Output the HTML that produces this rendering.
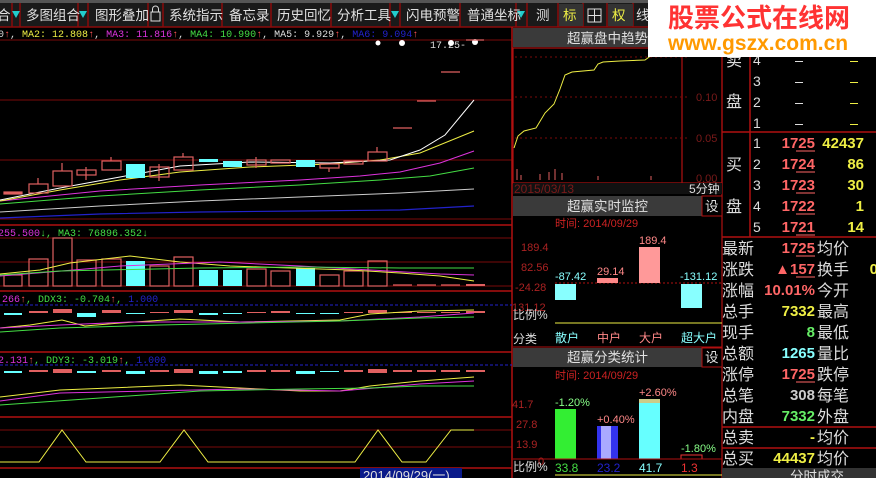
<!DOCTYPE html>
<html><head><meta charset="utf-8"><style>
html,body{margin:0;padding:0;background:#000;width:876px;height:478px;overflow:hidden}
svg text{font-family:"Liberation Sans","Noto Sans CJK SC",sans-serif}
.t{font-size:13.5px;fill:#e0e0e0}
.m{font-family:"Liberation Mono","Noto Sans CJK SC",monospace !important;font-size:10px}
</style></head><body>
<svg width="876" height="478" viewBox="0 0 876 478" xmlns="http://www.w3.org/2000/svg">
<rect x="0" y="0" width="876" height="27" fill="#1a1a1a"/>
<rect x="0" y="0" width="876" height="3" fill="#555"/>
<g stroke="#8a0a0a" stroke-width="1.5">
<line x1="12" y1="3" x2="12" y2="27"/><line x1="20" y1="3" x2="20" y2="27"/><line x1="78" y1="3" x2="78" y2="27"/><line x1="88" y1="3" x2="88" y2="27"/><line x1="148" y1="3" x2="148" y2="27"/><line x1="163" y1="3" x2="163" y2="27"/><line x1="222" y1="3" x2="222" y2="27"/><line x1="271" y1="3" x2="271" y2="27"/><line x1="331" y1="3" x2="331" y2="27"/><line x1="390" y1="3" x2="390" y2="27"/><line x1="400" y1="3" x2="400" y2="27"/><line x1="460" y1="3" x2="460" y2="27"/><line x1="516" y1="3" x2="516" y2="27"/><line x1="527" y1="3" x2="527" y2="27"/><line x1="558" y1="3" x2="558" y2="27"/><line x1="583" y1="3" x2="583" y2="27"/><line x1="607" y1="3" x2="607" y2="27"/><line x1="633" y1="3" x2="633" y2="27"/>
<line x1="0" y1="27" x2="876" y2="27"/>
</g>
<text x="-3" y="20" class="t">合</text>
<path d="M12 11h8l-4 7z" fill="#2cc"/><path d="M79 11h8l-4 7z" fill="#2cc"/><path d="M391 11h8l-4 7z" fill="#2cc"/><path d="M517 11h8l-4 7z" fill="#2cc"/>
<text x="26" y="20" class="t">多图组合</text><text x="95" y="20" class="t">图形叠加</text>
<rect x="151" y="12" width="9" height="9" fill="none" stroke="#ddd"/><path d="M152.5 12v-3a3 3 0 0 1 6 0v3" fill="none" stroke="#ddd"/>
<text x="169" y="20" class="t">系统指示</text><text x="229" y="20" class="t">备忘录</text><text x="277" y="20" class="t">历史回忆</text><text x="337" y="20" class="t">分析工具</text><text x="406" y="20" class="t">闪电预警</text><text x="467" y="20" class="t">普通坐标</text>
<text x="536" y="20" class="t">测</text><rect x="559" y="4" width="24" height="22" fill="#333"/>
<rect x="588" y="9" width="13" height="13" fill="none" stroke="#ddd"/><path d="M594.5 9v13M588 15.5h13" stroke="#ddd"/>
<rect x="608" y="4" width="25" height="22" fill="#333"/><text x="612" y="20" class="t" style="fill:#ee4">权</text><text x="636" y="20" class="t">线</text>
<text x="563" y="20" class="t" style="fill:#ee4">标</text>

<g stroke="#7a0a0a" stroke-width="1">
<line x1="0" y1="40" x2="512" y2="40"/><line x1="0" y1="100" x2="512" y2="100"/><line x1="0" y1="160" x2="512" y2="160"/><line x1="0" y1="219" x2="512" y2="219"/>
<line x1="0" y1="238" x2="512" y2="238"/><line x1="0" y1="262" x2="512" y2="262"/><line x1="0" y1="286" x2="512" y2="286"/>
<line x1="0" y1="430" x2="512" y2="430"/><line x1="0" y1="447" x2="512" y2="447"/>
</g>
<g stroke="#b01010" stroke-width="1.5">
<line x1="0" y1="225" x2="512" y2="225"/><line x1="0" y1="291" x2="512" y2="291"/><line x1="0" y1="352" x2="512" y2="352"/><line x1="0" y1="417" x2="512" y2="417"/><line x1="0" y1="468" x2="512" y2="468"/>
<line x1="512" y1="27" x2="512" y2="478"/>
</g>
<text y="37" class="m"><tspan x="-2" fill="#ddd">0</tspan><tspan fill="#f55">↑</tspan><tspan fill="#ddd">, </tspan><tspan fill="#ee4">MA2: 12.808</tspan><tspan fill="#f55">↑</tspan><tspan fill="#ddd">, </tspan><tspan fill="#d3d">MA3: 11.816</tspan><tspan fill="#f55">↑</tspan><tspan fill="#ddd">, </tspan><tspan fill="#4d4">MA4: 10.990</tspan><tspan fill="#f55">↑</tspan><tspan fill="#ddd">, MA5: 9.929</tspan><tspan fill="#f55">↑</tspan><tspan fill="#ddd">, </tspan><tspan fill="#22c">MA6: 9.094</tspan><tspan fill="#f55">↑</tspan></text>
<text x="430" y="48" class="m" fill="#ddd">17.25-</text>
<g fill="#fff"><circle cx="378" cy="43" r="2.5"/><circle cx="402" cy="43" r="3"/><circle cx="451" cy="43" r="3"/><circle cx="475" cy="42" r="3"/></g>
<polyline fill="none" stroke="#22c" stroke-width="1.2" points="0,218 100,214 200,212 300,211 400,210 474,206"/>
<polyline fill="none" stroke="#ccc" stroke-width="1" points="0,212 100,206 200,201 300,197 400,193 474,189"/>
<polyline fill="none" stroke="#4d4" stroke-width="1" points="0,204 100,196 200,190 300,185 380,180 430,176 474,168"/>
<polyline fill="none" stroke="#d3d" stroke-width="1" points="0,201 100,191 200,185 300,180 360,176 400,172 440,163 474,151"/>
<polyline fill="none" stroke="#ee4" stroke-width="1" points="0,201 60,190 120,180 180,172 250,167 330,164 380,160 420,153 474,131"/>
<polyline fill="none" stroke="#fff" stroke-width="1" points="0,200 60,188 120,177 180,166 250,162 330,163 390,160 420,150 445,135 474,100"/>
<g fill="none" stroke="#e06060" stroke-width="1.2">
<rect x="4" y="192" width="18" height="2" fill="#e06060"/>
<rect x="29" y="184" width="19" height="9"/><line x1="38" y1="178" x2="38" y2="184"/>
<rect x="53" y="171" width="19" height="15"/><line x1="62" y1="163" x2="62" y2="171"/>
<rect x="77" y="170" width="19" height="5"/><line x1="86" y1="167" x2="86" y2="180"/>
<rect x="102" y="161" width="19" height="9"/><line x1="111" y1="157" x2="111" y2="161"/>
<rect x="150" y="167" width="19" height="10"/><line x1="159" y1="164" x2="159" y2="181"/>
<rect x="174" y="157" width="19" height="13"/><line x1="183" y1="153" x2="183" y2="157"/>
<rect x="247" y="160" width="19" height="5"/><line x1="256" y1="157" x2="256" y2="168"/>
<rect x="271" y="160" width="19" height="3"/>
<rect x="320" y="164" width="19" height="4"/><line x1="329" y1="168" x2="329" y2="172"/>
<rect x="344" y="161" width="19" height="3"/>
<rect x="368" y="152" width="19" height="9"/><line x1="377" y1="147" x2="377" y2="152"/>
<line x1="393" y1="128" x2="412" y2="128"/><line x1="417" y1="101" x2="436" y2="101"/><line x1="441" y1="72" x2="460" y2="72"/><line x1="466" y1="40" x2="484" y2="40"/>
</g>
<g fill="#6ff"><rect x="126" y="164" width="19" height="14"/><rect x="199" y="159" width="19" height="3"/><rect x="223" y="161" width="19" height="6"/><rect x="296" y="160" width="19" height="7"/></g>
<text y="236" class="m"><tspan x="-2" fill="#d3d">255.500</tspan><tspan fill="#4d4">↓, MA3: 76896.352↓</tspan></text>
<g fill="none" stroke="#e06060" stroke-width="1.2">
<rect x="4" y="275" width="18" height="11"/><rect x="29" y="259" width="19" height="27"/><rect x="53" y="238" width="19" height="48"/><rect x="77" y="260" width="19" height="26"/><rect x="102" y="259" width="19" height="27"/><rect x="150" y="266" width="19" height="20"/><rect x="174" y="257" width="19" height="29"/><rect x="247" y="269" width="19" height="17"/><rect x="271" y="271" width="19" height="15"/><rect x="320" y="275" width="19" height="11"/><rect x="344" y="271" width="19" height="15"/><rect x="368" y="261" width="19" height="25"/>
<line x1="393" y1="285" x2="412" y2="285"/><line x1="417" y1="285" x2="436" y2="285"/><line x1="441" y1="285" x2="460" y2="285"/>
</g>
<rect x="466" y="284" width="19" height="2" fill="#e06060"/>
<g fill="#6ff"><rect x="126" y="261" width="19" height="25"/><rect x="199" y="270" width="19" height="16"/><rect x="223" y="270" width="19" height="16"/><rect x="296" y="268" width="19" height="18"/></g>
<polyline fill="none" stroke="#ee4" points="0,274 40,270 70,263 130,256 180,262 230,266 290,268 350,270 400,273 440,276 474,281"/>
<polyline fill="none" stroke="#d3d" points="0,276 50,272 120,266 220,262 300,266 370,270 440,274 474,275"/>
<polyline fill="none" stroke="#4d4" points="0,275 60,271 200,268 300,267 400,268 474,268"/>
<text y="302" class="m"><tspan x="2" fill="#d3d">266</tspan><tspan fill="#f55">↑</tspan><tspan fill="#4d4">, DDX3: -0.704</tspan><tspan fill="#f55">↑</tspan><tspan fill="#4d4">, </tspan><tspan fill="#22c">1.000</tspan></text>
<line x1="0" y1="305" x2="512" y2="305" stroke="#22c" stroke-dasharray="3,2"/>
<g fill="#e06060"><rect x="29" y="311" width="19" height="2"/><rect x="53" y="309" width="19" height="4"/><rect x="102" y="310" width="19" height="3"/><rect x="150" y="312" width="19" height="1"/><rect x="174" y="310" width="19" height="3"/><rect x="247" y="312" width="19" height="1"/><rect x="271" y="311" width="19" height="2"/><rect x="344" y="312" width="19" height="1"/><rect x="368" y="310" width="19" height="3"/><rect x="393" y="312" width="19" height="1"/><rect x="417" y="312" width="19" height="1"/><rect x="441" y="312" width="19" height="1"/><rect x="466" y="311" width="19" height="2"/></g>
<g fill="#6ff"><rect x="4" y="313" width="18" height="2"/><rect x="77" y="313" width="19" height="4"/><rect x="126" y="313" width="19" height="1"/><rect x="199" y="313" width="19" height="2"/><rect x="223" y="313" width="19" height="1"/><rect x="296" y="313" width="19" height="1"/><rect x="320" y="313" width="19" height="1"/></g>
<polyline fill="none" stroke="#ee4" points="0,328 30,325 62,320 85,326 120,323 180,319 240,322 340,320 370,314 420,311 474,310"/>
<polyline fill="none" stroke="#d3d" points="0,328 60,325 130,322 240,322 340,321 420,317 474,313"/>
<polyline fill="none" stroke="#4d4" points="0,332 60,328 160,325 250,323 340,321 420,318 474,317"/>
<text y="363" class="m"><tspan x="-2" fill="#d3d">2.131</tspan><tspan fill="#f55">↑</tspan><tspan fill="#4d4">, DDY3: -3.019</tspan><tspan fill="#f55">↑</tspan><tspan fill="#4d4">, </tspan><tspan fill="#22c">1.000</tspan></text>
<line x1="0" y1="365" x2="512" y2="365" stroke="#22c" stroke-dasharray="3,2"/>
<g fill="#e06060"><rect x="29" y="370" width="19" height="2"/><rect x="53" y="369" width="19" height="4"/><rect x="102" y="370" width="19" height="2"/><rect x="150" y="370" width="19" height="2"/><rect x="174" y="369" width="19" height="4"/><rect x="247" y="370" width="19" height="2"/><rect x="271" y="370" width="19" height="2"/><rect x="344" y="370" width="19" height="2"/><rect x="368" y="369" width="19" height="4"/><rect x="393" y="370" width="19" height="2"/><rect x="417" y="370" width="19" height="2"/><rect x="441" y="370" width="19" height="2"/><rect x="466" y="370" width="19" height="2"/></g>
<g fill="#6ff"><rect x="4" y="371" width="18" height="2"/><rect x="77" y="371" width="19" height="2"/><rect x="126" y="371" width="19" height="3"/><rect x="199" y="371" width="19" height="3"/><rect x="223" y="371" width="19" height="2"/><rect x="296" y="371" width="19" height="3"/><rect x="320" y="371" width="19" height="1"/></g>
<polyline fill="none" stroke="#ee4" points="0,397 60,390 110,388 180,385 240,388 300,391 340,391 370,386 420,381 474,377"/>
<polyline fill="none" stroke="#d3d" points="0,401 60,393 150,391 240,389 340,391 420,384 474,381"/>
<polyline fill="none" stroke="#4d4" points="0,405 100,398 200,391 300,389 370,388 420,386 474,386"/>
<polyline fill="none" stroke="#ee4" points="0,462 39,462 62,430 86,462 160,462 184,430 208,462 355,462 378,430 402,462 426,462 451,430 474,430"/>
<rect x="360" y="468" width="102" height="10" fill="#0a1a8a"/>
<text x="363" y="480" font-size="13" fill="#ddd" font-family="Liberation Mono">2014/09/29(一)</text>

<g stroke="#b01010" stroke-width="1.2" fill="none">
<rect x="513" y="48" width="209" height="135"/>
<line x1="722" y1="27" x2="722" y2="478"/>
<line x1="682" y1="48" x2="682" y2="183"/>
</g>
<rect x="513" y="28" width="209" height="19" fill="#3a3a3a"/>
<text x="567" y="43" class="t">超赢盘中趋势</text>
<g stroke="#7a0a0a" stroke-dasharray="2,3"><line x1="515" y1="57" x2="690" y2="57"/><line x1="515" y1="97" x2="690" y2="97"/><line x1="515" y1="138" x2="690" y2="138"/></g>
<g font-size="11" fill="#7a1a1a" font-family="Liberation Mono"><text x="696" y="101">0.10</text><text x="696" y="142">0.05</text><text x="696" y="182">0.00</text></g>
<polyline fill="none" stroke="#ee4" points="514,148 518,136 524,131 536,128 545,113 554,104 560,89 565,75 572,72 594,70 598,64 603,62 620,61 645,60 652,55"/>
<g stroke="#e06060"><line x1="517" y1="169" x2="517" y2="180"/><line x1="521" y1="175" x2="521" y2="180"/><line x1="540" y1="174" x2="540" y2="180"/><line x1="549" y1="172" x2="549" y2="180"/><line x1="555" y1="169" x2="555" y2="180"/><line x1="562" y1="173" x2="562" y2="180"/><line x1="598" y1="176" x2="598" y2="180"/><line x1="651" y1="176" x2="651" y2="180"/></g>
<rect x="513" y="183" width="209" height="11" fill="#111"/>
<text x="514" y="193" font-size="12" fill="#7a1a1a" font-family="Liberation Mono">2015/03/13</text>
<text x="689" y="193" font-size="12" fill="#ddd">5分钟</text>
<rect x="513" y="196" width="189" height="20" fill="#3a3a3a"/>
<rect x="702" y="196" width="20" height="20" fill="#000" stroke="#b01010"/>
<text x="567" y="211" class="t">超赢实时监控</text><text x="705" y="211" class="t">设</text>
<text x="555" y="227" font-size="11" fill="#c22" font-family="Liberation Mono">时间: 2014/09/29</text>
<g font-size="11" fill="#a22" font-family="Liberation Mono"><text x="521" y="251">189.4</text><text x="521" y="271">82.56</text><text x="515" y="291">-24.28</text><text x="512" y="311">131.12</text><text x="512" y="408">41.7</text><text x="516" y="428">27.8</text><text x="516" y="448">13.9</text><text x="538" y="465">0</text></g>
<line x1="555" y1="283" x2="722" y2="283" stroke="#b01010" stroke-dasharray="2,2"/>
<rect x="555" y="284" width="21" height="16" fill="#8ff"/>
<rect x="597" y="278" width="21" height="5" fill="#f88"/>
<rect x="639" y="247" width="21" height="36" fill="#f99"/>
<rect x="681" y="284" width="21" height="24" fill="#8ff"/>
<g font-size="11" font-family="Liberation Mono"><text x="555" y="280" fill="#8ff">-87.42</text><text x="597" y="275" fill="#f88">29.14</text><text x="639" y="244" fill="#f88">189.4</text><text x="680" y="280" fill="#8ff">-131.12</text></g>
<text x="513" y="319" font-size="12" fill="#ddd">比例%</text>
<line x1="555" y1="323" x2="722" y2="323" stroke="#ee4"/>
<text x="513" y="343" font-size="12" fill="#ddd">分类</text>
<g font-size="12"><text x="555" y="342" fill="#8ff">散户</text><text x="597" y="342" fill="#f88">中户</text><text x="639" y="342" fill="#f88">大户</text><text x="681" y="342" fill="#8ff">超大户</text></g>
<line x1="513" y1="347" x2="722" y2="347" stroke="#b01010"/>
<rect x="513" y="348" width="189" height="19" fill="#3a3a3a"/>
<rect x="702" y="348" width="20" height="19" fill="#000" stroke="#b01010"/>
<text x="567" y="362" class="t">超赢分类统计</text><text x="705" y="362" class="t">设</text>
<text x="555" y="379" font-size="11" fill="#c22" font-family="Liberation Mono">时间: 2014/09/29</text>
<rect x="555" y="409" width="21" height="50" fill="#3e3"/><rect x="597" y="426" width="21" height="33" fill="#33e"/><rect x="601" y="426" width="10" height="33" fill="#aaf"/><rect x="639" y="399" width="21" height="60" fill="#6ff"/><rect x="639" y="399" width="21" height="4" fill="#cc8"/><rect x="681" y="455" width="21" height="4" fill="none" stroke="#e33"/>
<g font-size="11" font-family="Liberation Mono"><text x="555" y="406" fill="#8f8">-1.20%</text><text x="597" y="423" fill="#f88">+0.40%</text><text x="639" y="396" fill="#f88">+2.60%</text><text x="681" y="452" fill="#8f8">-1.80%</text></g>
<line x1="513" y1="459" x2="722" y2="459" stroke="#b01010"/>
<text x="513" y="471" font-size="12" fill="#ddd">比例%</text>
<g font-size="12" font-family="Liberation Mono"><text x="555" y="472" fill="#4d4">33.8</text><text x="597" y="472" fill="#22c">23.2</text><text x="639" y="472" fill="#8ff">41.7</text><text x="681" y="472" fill="#e33">1.3</text></g>
<line x1="555" y1="475" x2="722" y2="475" stroke="#ee4"/>

<g stroke="#b01010" stroke-width="1.5"><line x1="722" y1="132" x2="876" y2="132"/><line x1="722" y1="237" x2="876" y2="237"/><line x1="722" y1="427" x2="876" y2="427"/><line x1="722" y1="448" x2="876" y2="448"/><line x1="750" y1="132" x2="750" y2="237"/><line x1="750" y1="27" x2="750" y2="132"/></g>
<g font-size="16" fill="#ddd">
<text x="726" y="66">卖</text><text x="726" y="107">盘</text>
<text x="726" y="170">买</text><text x="726" y="212">盘</text>
</g>
<g font-size="14" fill="#ddd" font-family="Liberation Mono">
<text x="753" y="65">4</text><text x="753" y="86">3</text><text x="753" y="107">2</text><text x="753" y="128">1</text>
<text x="753" y="148">1</text><text x="753" y="169">2</text><text x="753" y="190">3</text><text x="753" y="211">4</text><text x="753" y="232">5</text>
</g>
<g fill="#ddd"><rect x="795" y="61" width="8" height="1"/><rect x="795" y="82" width="8" height="1"/><rect x="795" y="103" width="8" height="1"/><rect x="795" y="124" width="8" height="1"/></g>
<g fill="#ee4"><rect x="850" y="61" width="8" height="1"/><rect x="850" y="82" width="8" height="1"/><rect x="850" y="103" width="8" height="1"/><rect x="850" y="124" width="8" height="1"/></g>
<g font-size="15" font-weight="bold" font-family="Liberation Mono" text-anchor="end">
<g fill="#f66"><text x="815" y="148">1725</text><text x="815" y="169">1724</text><text x="815" y="190">1723</text><text x="815" y="211">1722</text><text x="815" y="232">1721</text></g>
<g fill="#ee4"><text x="864" y="148">42437</text><text x="864" y="169">86</text><text x="864" y="190">30</text><text x="864" y="211">1</text><text x="864" y="232">14</text></g>
</g>
<g stroke="#f66"><line x1="796" y1="151" x2="815" y2="151"/><line x1="796" y1="172" x2="815" y2="172"/><line x1="796" y1="193" x2="815" y2="193"/><line x1="796" y1="214" x2="815" y2="214"/><line x1="796" y1="235" x2="815" y2="235"/></g>
<g font-size="16" fill="#ddd">
<text x="722" y="254">最新</text><text x="722" y="275">涨跌</text><text x="722" y="296">涨幅</text><text x="722" y="317">总手</text><text x="722" y="338">现手</text><text x="722" y="359">总额</text><text x="722" y="380">涨停</text><text x="722" y="401">总笔</text><text x="722" y="422">内盘</text><text x="722" y="443">总卖</text><text x="722" y="464">总买</text>
<text x="817" y="254">均价</text><text x="817" y="275">换手</text><text x="817" y="296">今开</text><text x="817" y="317">最高</text><text x="817" y="338">最低</text><text x="817" y="359">量比</text><text x="817" y="380">跌停</text><text x="817" y="401">每笔</text><text x="817" y="422">外盘</text><text x="817" y="443">均价</text><text x="817" y="464">均价</text>
</g>
<g font-size="15" font-weight="bold" font-family="Liberation Mono" text-anchor="end">
<text x="815" y="253" fill="#f66">1725</text><text x="815" y="274" fill="#f66">▲157</text><text x="815" y="295" fill="#f66">10.01%</text><text x="815" y="316" fill="#ee4">7332</text><text x="815" y="337" fill="#6e6">8</text><text x="815" y="358" fill="#8ff">1265</text><text x="815" y="379" fill="#f66">1725</text><text x="815" y="400" fill="#ccc">308</text><text x="815" y="421" fill="#6e6">7332</text><text x="815" y="442" fill="#ee4">-</text><text x="815" y="463" fill="#ee4">44437</text>
<text x="878" y="274" fill="#ee4">0</text>
</g>
<g stroke="#f66"><line x1="796" y1="256" x2="815" y2="256"/><line x1="796" y1="277" x2="815" y2="277"/><line x1="796" y1="382" x2="815" y2="382"/></g>
<rect x="722" y="468" width="154" height="10" fill="#333"/>
<text x="790" y="481" class="t">分时成交</text>

<rect x="648" y="0" width="228" height="57" fill="#fff"/>
<text x="668" y="27" font-size="26" font-weight="bold" fill="#f33">股票公式在线网</text>
<text x="668" y="50" font-size="21" font-weight="bold" fill="#f90">www.gszx.com.cn</text>
</svg>
</body></html>
